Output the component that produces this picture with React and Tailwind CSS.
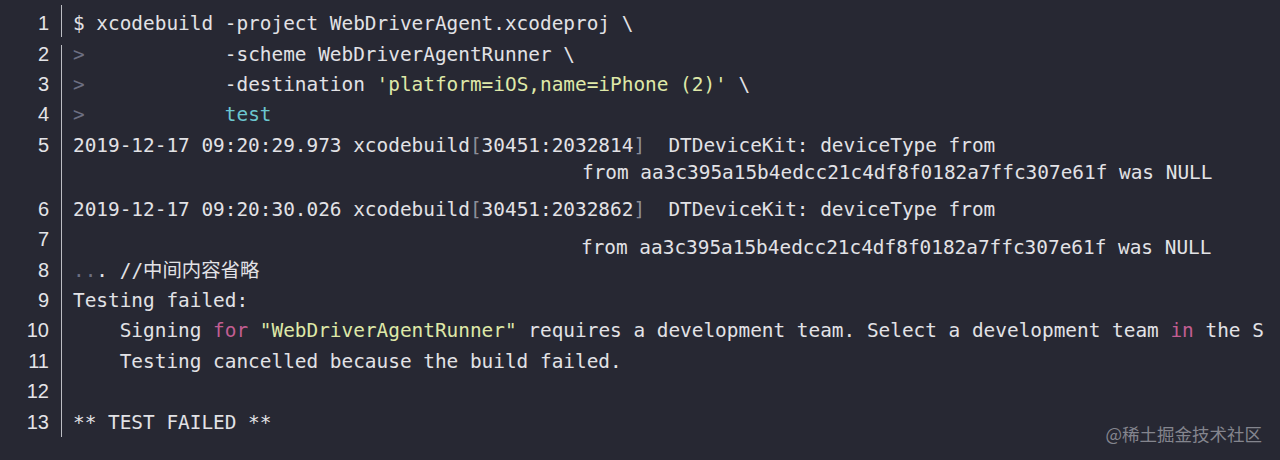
import clsx from "clsx";

const mono = "font-['DejaVu_Sans_Mono','Noto_Sans_CJK_SC',monospace]";

function Row({ n, h = "h-[30px]", divider = "", children }) {
  return (
    <div className={clsx("flex", h)}>
      <div className="w-[49px] pt-px text-right font-['Liberation_Sans',Arial,sans-serif] text-[20px] leading-[30px] text-[#e4e4e8]">
        {n}
      </div>
      <div className={clsx("ml-[12px] w-px bg-[#bdbec4]", divider)} />
      <div
        className={clsx(
          "pl-[11px] pt-[2px] text-[19.4px] leading-[30px] text-[#e2e2e6] whitespace-pre",
          mono
        )}
      >
        {children}
      </div>
    </div>
  );
}

const Gray = ({ children }) => <span className="text-[#6c6f82]">{children}</span>;
const Str = ({ children }) => <span className="text-[#dfe8a8]">{children}</span>;
const Kw = ({ children }) => <span className="text-[#c25e92]">{children}</span>;
const Br = ({ children }) => <span className="text-[#8c8e9a]">{children}</span>;

export default function App() {
  return (
    <div className="relative h-[460px] w-[1280px] overflow-hidden bg-[#272833] pt-[7px]">
      <Row n="1" h="h-[31px]" divider="-mt-[2px] mb-[1px]">
        $ xcodebuild -project WebDriverAgent.xcodeproj \
      </Row>
      <Row n="2" divider="mt-[7px]">
        <Gray>&gt;</Gray>
        {"            -scheme WebDriverAgentRunner \\"}
      </Row>
      <Row n="3">
        <Gray>&gt;</Gray>
        {"            -destination "}
        <Str>'platform=iOS,name=iPhone (2)'</Str>
        {" \\"}
      </Row>
      <Row n="4" h="h-[31px]">
        <Gray>&gt;</Gray>
        {"            "}
        <span className="text-[#6cc6d0]">test</span>
      </Row>
      <Row n="5" h="h-[64px]">
        <div>
          {"2019-12-17 09:20:29.973 xcodebuild"}
          <Br>[</Br>
          {"30451:2032814"}
          <Br>]</Br>
          {"  DTDeviceKit: deviceType from"}
        </div>
        <div className="-mt-[2px] ml-[509px] leading-[28px]">
          from aa3c395a15b4edcc21c4df8f0182a7ffc307e61f was NULL
        </div>
      </Row>
      <Row n="6">
        {"2019-12-17 09:20:30.026 xcodebuild"}
        <Br>[</Br>
        {"30451:2032862"}
        <Br>]</Br>
        {"  DTDeviceKit: deviceType from"}
      </Row>
      <Row n="7" h="h-[31px]">
        <div className="mt-[8px] ml-[508px]">
          from aa3c395a15b4edcc21c4df8f0182a7ffc307e61f was NULL
        </div>
      </Row>
      <Row n="8">
        <Gray>..</Gray>. //中间内容省略
      </Row>
      <Row n="9">Testing failed:</Row>
      <Row n="10" h="h-[31px]">
        {"    Signing "}
        <Kw>for</Kw> <Str>"WebDriverAgentRunner"</Str>
        {" requires a development team. Select a development team "}
        <Kw>in</Kw>
        {" the S"}
      </Row>
      <Row n="11">{"    Testing cancelled because the build failed."}</Row>
      <Row n="12" h="h-[31px]"> </Row>
      <Row n="13" h="h-[31px]">** TEST FAILED **</Row>

      <div className="absolute right-[18px] bottom-[15px] font-['Noto_Sans_CJK_SC','Liberation_Sans',sans-serif] text-[17.5px] leading-[22px] text-[#84858e]">
        @稀土掘金技术社区
      </div>
    </div>
  );
}
